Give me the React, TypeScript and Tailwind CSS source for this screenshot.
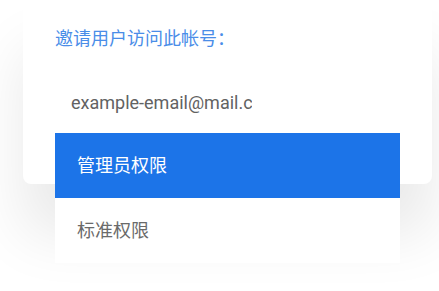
export default function App() {
  const options = [
    { label: '管理员权限', active: true },
    { label: '标准权限', active: false },
  ];

  return (
    <div className="h-[291px] w-[439px] overflow-hidden bg-white pl-[23px] pr-[7px] font-['Roboto','Noto_Sans_CJK_SC',sans-serif]">
      <div className="relative h-[184px] rounded-b-lg bg-white shadow-[0_50px_60px_rgba(0,0,0,0.09)]">
        <div className="pl-[32px] pt-[27px]">
          <p className="text-[18px] leading-[24px] text-[#4a8de8]">邀请用户访问此帐号：</p>
          <div className="mt-[40px] w-[197px] overflow-hidden whitespace-nowrap pl-[16px] text-[18px] leading-[24px] text-[#626262]">
            example-email@mail.com
          </div>
        </div>

        <ul className="absolute left-[32px] top-[133px] w-[345px] bg-white">
          {options.map((o) => (
            <li
              key={o.label}
              className={`flex h-[65px] items-center pl-[22px] text-[18px] ${
                o.active ? 'bg-[#1c74e8] text-white' : 'bg-white text-[#6a6a6a]'
              }`}
            >
              {o.label}
            </li>
          ))}
        </ul>
      </div>
    </div>
  );
}
